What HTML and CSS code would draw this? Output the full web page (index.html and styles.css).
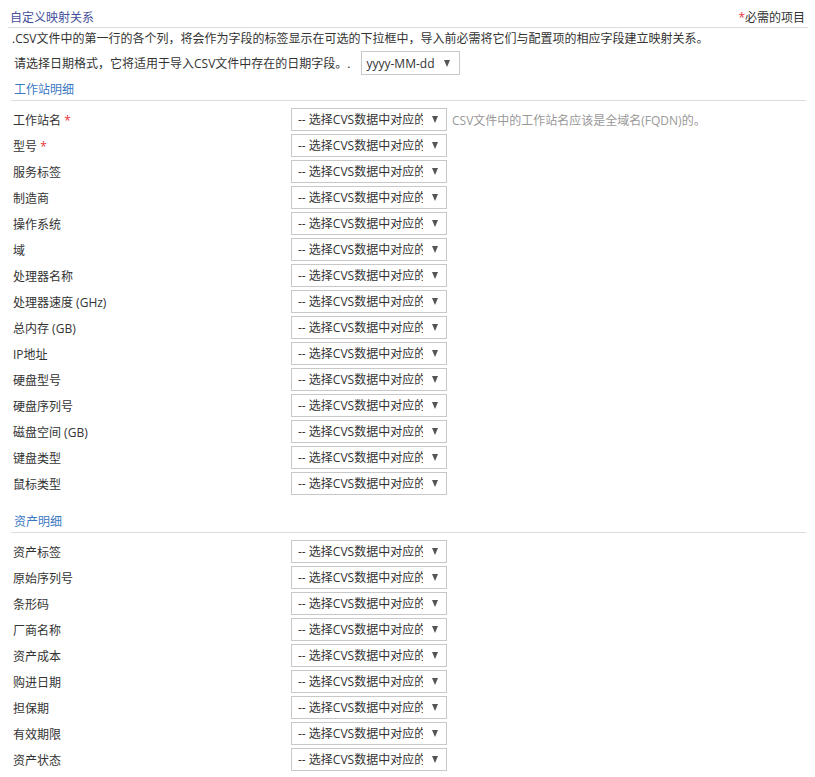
FILE: index.html
```html
<!DOCTYPE html>
<html lang="zh-CN">
<head>
    <meta charset="UTF-8">
    <meta name="viewport" content="width=device-width, initial-scale=1.0">
    <title>自定义映射关系</title>
    <link rel="stylesheet" href="styles.css">
</head>
<body>
    <div id="mapping-panel">
        <div class="panel-title">
            <span class="title-text">自定义映射关系</span>
            <span class="required-note"><span class="star">*</span>必需的项目</span>
        </div>
        <div class="panel-body">
            <div class="intro">.CSV文件中的第一行的各个列，将会作为字段的标签显示在可选的下拉框中，导入前必需将它们与配置项的相应字段建立映射关系。</div>
            <div class="date-row">
                <span>请选择日期格式，它将适用于导入CSV文件中存在的日期字段。.</span>
                <span class="select-wrap date-select">
                    <select>
                        <option>yyyy-MM-dd</option>
                        <option>dd-MM-yyyy</option>
                        <option>MM-dd-yyyy</option>
                    </select>
                </span>
            </div>

            <div class="section-title">工作站明细</div>
            <div class="field-list">
                <div class="field-row">
                    <label class="field-label">工作站名 <span class="star">*</span></label>
                    <span class="select-wrap"><select><option>-- 选择CVS数据中对应的字段 --</option></select></span>
                    <span class="hint">CSV文件中的工作站名应该是全域名(FQDN)的。</span>
                </div>
                <div class="field-row">
                    <label class="field-label">型号 <span class="star">*</span></label>
                    <span class="select-wrap"><select><option>-- 选择CVS数据中对应的字段 --</option></select></span>
                </div>
                <div class="field-row">
                    <label class="field-label">服务标签</label>
                    <span class="select-wrap"><select><option>-- 选择CVS数据中对应的字段 --</option></select></span>
                </div>
                <div class="field-row">
                    <label class="field-label">制造商</label>
                    <span class="select-wrap"><select><option>-- 选择CVS数据中对应的字段 --</option></select></span>
                </div>
                <div class="field-row">
                    <label class="field-label">操作系统</label>
                    <span class="select-wrap"><select><option>-- 选择CVS数据中对应的字段 --</option></select></span>
                </div>
                <div class="field-row">
                    <label class="field-label">域</label>
                    <span class="select-wrap"><select><option>-- 选择CVS数据中对应的字段 --</option></select></span>
                </div>
                <div class="field-row">
                    <label class="field-label">处理器名称</label>
                    <span class="select-wrap"><select><option>-- 选择CVS数据中对应的字段 --</option></select></span>
                </div>
                <div class="field-row">
                    <label class="field-label">处理器速度 (GHz)</label>
                    <span class="select-wrap"><select><option>-- 选择CVS数据中对应的字段 --</option></select></span>
                </div>
                <div class="field-row">
                    <label class="field-label">总内存 (GB)</label>
                    <span class="select-wrap"><select><option>-- 选择CVS数据中对应的字段 --</option></select></span>
                </div>
                <div class="field-row">
                    <label class="field-label">IP地址</label>
                    <span class="select-wrap"><select><option>-- 选择CVS数据中对应的字段 --</option></select></span>
                </div>
                <div class="field-row">
                    <label class="field-label">硬盘型号</label>
                    <span class="select-wrap"><select><option>-- 选择CVS数据中对应的字段 --</option></select></span>
                </div>
                <div class="field-row">
                    <label class="field-label">硬盘序列号</label>
                    <span class="select-wrap"><select><option>-- 选择CVS数据中对应的字段 --</option></select></span>
                </div>
                <div class="field-row">
                    <label class="field-label">磁盘空间 (GB)</label>
                    <span class="select-wrap"><select><option>-- 选择CVS数据中对应的字段 --</option></select></span>
                </div>
                <div class="field-row">
                    <label class="field-label">键盘类型</label>
                    <span class="select-wrap"><select><option>-- 选择CVS数据中对应的字段 --</option></select></span>
                </div>
                <div class="field-row">
                    <label class="field-label">鼠标类型</label>
                    <span class="select-wrap"><select><option>-- 选择CVS数据中对应的字段 --</option></select></span>
                </div>
            </div>

            <div class="section-title asset-title">资产明细</div>
            <div class="field-list">
                <div class="field-row">
                    <label class="field-label">资产标签</label>
                    <span class="select-wrap"><select><option>-- 选择CVS数据中对应的字段 --</option></select></span>
                </div>
                <div class="field-row">
                    <label class="field-label">原始序列号</label>
                    <span class="select-wrap"><select><option>-- 选择CVS数据中对应的字段 --</option></select></span>
                </div>
                <div class="field-row">
                    <label class="field-label">条形码</label>
                    <span class="select-wrap"><select><option>-- 选择CVS数据中对应的字段 --</option></select></span>
                </div>
                <div class="field-row">
                    <label class="field-label">厂商名称</label>
                    <span class="select-wrap"><select><option>-- 选择CVS数据中对应的字段 --</option></select></span>
                </div>
                <div class="field-row">
                    <label class="field-label">资产成本</label>
                    <span class="select-wrap"><select><option>-- 选择CVS数据中对应的字段 --</option></select></span>
                </div>
                <div class="field-row">
                    <label class="field-label">购进日期</label>
                    <span class="select-wrap"><select><option>-- 选择CVS数据中对应的字段 --</option></select></span>
                </div>
                <div class="field-row">
                    <label class="field-label">担保期</label>
                    <span class="select-wrap"><select><option>-- 选择CVS数据中对应的字段 --</option></select></span>
                </div>
                <div class="field-row">
                    <label class="field-label">有效期限</label>
                    <span class="select-wrap"><select><option>-- 选择CVS数据中对应的字段 --</option></select></span>
                </div>
                <div class="field-row">
                    <label class="field-label">资产状态</label>
                    <span class="select-wrap"><select><option>-- 选择CVS数据中对应的字段 --</option></select></span>
                </div>
            </div>
        </div>
    </div>
</body>
</html>
```

FILE: styles.css
```css
body {
    margin: 0;
    font-family: 'Open Sans', 'Noto Sans CJK SC', sans-serif;
    font-size: 12px;
    color: #333;
    background-color: #fff;
}

#mapping-panel {
    width: 800px;
    margin-left: 8px;
}

.panel-title {
    display: flex;
    justify-content: space-between;
    align-items: flex-end;
    padding: 9px 3px 0 2px;
    line-height: 18px;
    border-bottom: 1px solid #dcdcdc;
}

.title-text {
    color: #45509a;
}

.star {
    color: #e8333a;
}

.panel-body {
    padding: 0 2px 0 3px;
}

.intro {
    line-height: 20px;
    margin-top: 1px;
    padding-left: 1px;
}

.date-row {
    display: flex;
    align-items: center;
    gap: 11px;
    height: 26px;
    margin-top: 1px;
    padding-left: 3px;
}

.section-title {
    margin-top: 4px;
    padding-left: 3px;
    line-height: 20px;
    color: #3a78c2;
    border-bottom: 1px solid #dcdcdc;
}

.asset-title {
    margin-top: 17px;
}

.field-list {
    margin-top: 7px;
}

.field-row {
    display: flex;
    align-items: center;
    height: 23px;
    margin-bottom: 3px;
}

.field-label {
    width: 278px;
    padding-left: 2px;
}

.select-wrap {
    position: relative;
    display: inline-block;
}

.select-wrap::after {
    content: "";
    position: absolute;
    right: 9px;
    top: 8px;
    border-left: 3.5px solid transparent;
    border-right: 3.5px solid transparent;
    border-top: 7px solid #555;
    pointer-events: none;
}

select {
    appearance: none;
    -webkit-appearance: none;
    box-sizing: border-box;
    width: 156px;
    height: 23px;
    padding: 0 23px 0 6px;
    border: 1px solid #c8c8c8;
    border-radius: 0;
    background-color: #fff;
    font-family: 'Open Sans', 'Noto Sans CJK SC', sans-serif;
    font-size: 12px;
    color: #333;
    outline: none;
}

.date-select select {
    width: 99px;
    height: 24px;
    padding: 0 20px 0 4px;
}

.date-select::after {
    right: 10px;
    top: 9px;
}

.hint {
    margin-left: 5px;
    color: #999;
}
```
